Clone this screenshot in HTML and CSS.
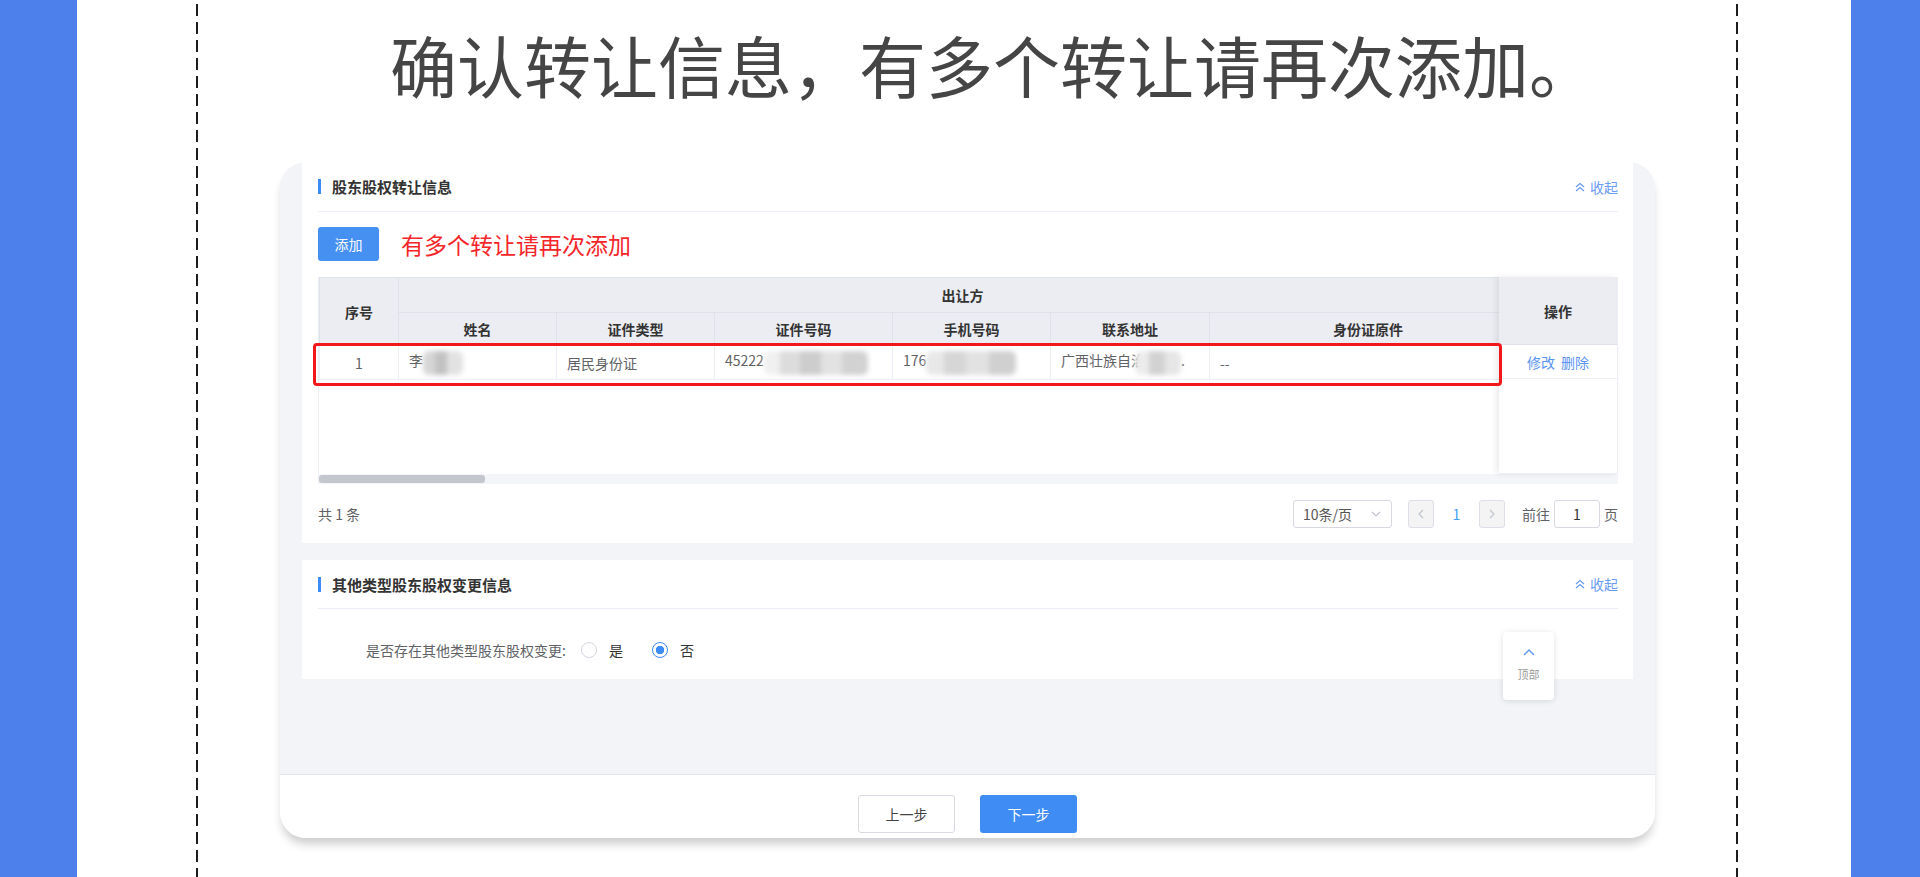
FILE: index.html
```html
<!DOCTYPE html>
<html lang="zh-CN">

<head>
    <meta charset="UTF-8" />
    <meta name="viewport" content="width=device-width, initial-scale=1" />
    <title>确认转让信息</title>
    <link rel="stylesheet" href="styles.css">
</head>

<body>
    <div class="page">
        <div class="side"></div>

        <div class="sheet">
            <div class="frame">
                <h1 class="title">确认转让信息，有多个转让请再次添加。</h1>

                <div class="shot">
                    <!-- 股东股权转让信息 -->
                    <section class="panel panel-first">
                        <div class="panel-head">
                            <span class="panel-title">股东股权转让信息</span>
                            <a class="fold">
                                <svg width="10" height="10" viewBox="0 0 10 10"><polyline points="1,5 5,1.5 9,5" /><polyline points="1,9 5,5.5 9,9" /></svg>
                                收起
                            </a>
                        </div>

                        <div class="toolbar">
                            <button class="btn btn-add">添加</button>
                            <span class="note">有多个转让请再次添加</span>
                        </div>

                        <div class="grid">
                            <div class="grid-body">
                                <div class="grid-main">
                                    <table>
                                        <colgroup>
                                            <col style="width:79px">
                                            <col style="width:158px">
                                            <col style="width:158px">
                                            <col style="width:178px">
                                            <col style="width:158px">
                                            <col style="width:159px">
                                            <col style="width:317px">
                                        </colgroup>
                                        <thead>
                                            <tr class="head-top">
                                                <th rowspan="2">序号</th>
                                                <th colspan="6">出让方</th>
                                            </tr>
                                            <tr class="head-sub">
                                                <th>姓名</th>
                                                <th>证件类型</th>
                                                <th>证件号码</th>
                                                <th>手机号码</th>
                                                <th>联系地址</th>
                                                <th>身份证原件</th>
                                            </tr>
                                        </thead>
                                        <tbody>
                                            <tr>
                                                <td class="num">1</td>
                                                <td>李<span class="blur blur-name"></span></td>
                                                <td>居民身份证</td>
                                                <td>45222<span class="blur blur-id"></span></td>
                                                <td>176<span class="blur blur-phone"></span></td>
                                                <td>广西壮族自治<span class="blur blur-addr"></span>.</td>
                                                <td>--</td>
                                            </tr>
                                        </tbody>
                                    </table>
                                </div>

                                <div class="grid-fixed">
                                    <div class="fixed-head">操作</div>
                                    <div class="fixed-row">
                                        <a>修改</a>
                                        <a>删除</a>
                                    </div>
                                </div>
                            </div>

                            <div class="scrollbar">
                                <div class="scroll-thumb"></div>
                            </div>

                            <div class="mark"></div>
                        </div>

                        <div class="pager">
                            <span class="total">共 1 条</span>
                            <div class="size-select">
                                <span>10条/页</span>
                                <svg width="10" height="6" viewBox="0 0 10 6"><polyline points="1,1 5,5 9,1" /></svg>
                            </div>
                            <span class="page-btn">
                                <svg width="6" height="10" viewBox="0 0 6 10"><polyline points="5,1 1,5 5,9" /></svg>
                            </span>
                            <span class="page-num">1</span>
                            <span class="page-btn">
                                <svg width="6" height="10" viewBox="0 0 6 10"><polyline points="1,1 5,5 1,9" /></svg>
                            </span>
                            <span class="goto">前往</span>
                            <span class="goto-input">1</span>
                            <span class="goto-unit">页</span>
                        </div>
                    </section>

                    <!-- 其他类型股东股权变更信息 -->
                    <section class="panel panel-second">
                        <div class="panel-head">
                            <span class="panel-title">其他类型股东股权变更信息</span>
                            <a class="fold">
                                <svg width="10" height="10" viewBox="0 0 10 10"><polyline points="1,5 5,1.5 9,5" /><polyline points="1,9 5,5.5 9,9" /></svg>
                                收起
                            </a>
                        </div>
                        <div class="form-row">
                            <span class="form-label">是否存在其他类型股东股权变更:</span>
                            <label class="radio"><span class="radio-dot"></span>是</label>
                            <label class="radio checked"><span class="radio-dot"></span>否</label>
                        </div>
                    </section>

                    <div class="shot-gap"></div>

                    <a class="to-top">
                        <svg width="12" height="7" viewBox="0 0 12 7"><polyline points="1,6 6,1 11,6" /></svg>
                        <span>顶部</span>
                    </a>

                    <div class="shot-foot">
                        <button class="btn btn-prev">上一步</button>
                        <button class="btn btn-next">下一步</button>
                    </div>
                </div>
            </div>
        </div>

        <div class="side side-right"></div>
    </div>
</body>

</html>
```

FILE: styles.css
```css
/* Reset & base */
* {
    margin: 0;
    padding: 0;
    box-sizing: border-box;
}

body {
    font-family: "Noto Sans CJK SC", "Noto Sans", sans-serif;
    color: #333;
    background: #fff;
}

a {
    cursor: pointer;
}

/* Page frame */
.page {
    display: flex;
    height: 877px;
    overflow: hidden;
}

.side {
    width: 77px;
    flex-shrink: 0;
    background-color: #4e80ec;
}

.side-right {
    width: 69px;
}

.sheet {
    flex: 1;
    background: #fff;
}

.frame {
    position: relative;
    width: 1542px;
    height: 100%;
    margin-left: 119px;
    background-image:
        repeating-linear-gradient(to bottom, #1c1c1c 0 12px, transparent 12px 18px),
        repeating-linear-gradient(to bottom, #1c1c1c 0 12px, transparent 12px 18px);
    background-size: 2px 100%;
    background-position: left 4px, right 4px;
    background-repeat: no-repeat;
}

.title {
    height: 162px;
    padding: 30px 0 0 52px;
    font-size: 67px;
    line-height: 67px;
    font-weight: 400;
    color: #454545;
    text-align: center;
    white-space: nowrap;
}

/* Screenshot card */
.shot {
    position: relative;
    display: flex;
    flex-direction: column;
    width: 1375px;
    height: 676px;
    margin-left: 84px;
    background-color: #f3f4f8;
    border-radius: 26px;
    overflow: hidden;
    box-shadow: 0 8px 10px -2px rgba(0, 0, 0, 0.2);
}

.panel {
    margin: 0 22px;
    padding: 0 15px 0 16px;
    background: #fff;
}

.panel-second {
    margin-top: 17px;
}

.panel-head {
    display: flex;
    align-items: center;
    justify-content: space-between;
    height: 50px;
    border-bottom: 1px solid #ebeef5;
}

.panel-second .panel-head {
    height: 49px;
}

.panel-title {
    padding-left: 11px;
    border-left: 3px solid #3d8bf5;
    font-size: 15px;
    line-height: 15px;
    font-weight: 700;
    color: #333;
}

.fold {
    display: flex;
    align-items: center;
    gap: 5px;
    font-size: 14px;
    color: #6a9cf6;
}

.fold svg polyline {
    fill: none;
    stroke: #6a9cf6;
    stroke-width: 1.3;
}

/* Toolbar */
.toolbar {
    display: flex;
    align-items: center;
    gap: 22px;
    margin-top: 15px;
}

.btn {
    border: none;
    border-radius: 3px;
    font-family: inherit;
    font-size: 14px;
    cursor: pointer;
}

.btn-add {
    width: 61px;
    height: 34px;
    background-color: #4690f2;
    color: #fff;
}

.note {
    font-size: 23px;
    color: #f4262a;
}

/* Table */
.grid {
    position: relative;
    margin-top: 16px;
}

.grid-body {
    display: flex;
    height: 197px;
}

.grid-main {
    flex: 1;
    overflow: hidden;
    background: #fff;
    border-left: 1px solid #ebeef5;
}

table {
    width: 1207px;
    table-layout: fixed;
    border-collapse: collapse;
}

th {
    padding: 0;
    background-color: #ebedf2;
    border: 1px solid #dfe2e9;
    font-size: 14px;
    font-weight: 700;
    color: #333;
    text-align: center;
}

.head-top th {
    height: 35px;
}

.head-sub th {
    height: 33px;
}

td {
    height: 34px;
    padding: 0 10px;
    border: 1px solid #ebeef5;
    font-size: 14px;
    color: #606266;
    white-space: nowrap;
    overflow: hidden;
}

td.num {
    text-align: center;
}

.blur {
    display: inline-block;
    height: 24px;
    vertical-align: middle;
    border-radius: 6px;
    filter: blur(2.4px);
}

.blur-name {
    width: 40px;
    background: linear-gradient(90deg, #d6d6d6 0 30%, #c2c2c2 30% 60%, #e2e2e2 60% 100%);
}

.blur-id {
    width: 104px;
    background: linear-gradient(90deg, #f0f0f0 0 15%, #dcdcdc 15% 35%, #cdcdcd 35% 55%, #e2e2e2 55% 75%, #d2d2d2 75% 100%);
}

.blur-phone {
    width: 90px;
    background: linear-gradient(90deg, #e8e8e8 0 20%, #d6d6d6 20% 45%, #e2e2e2 45% 70%, #d0d0d0 70% 100%);
}

.blur-addr {
    width: 46px;
    margin-left: -10px;
    background: linear-gradient(90deg, #ececec 0 30%, #d2d2d2 30% 65%, #e6e6e6 65% 100%);
}

.grid-fixed {
    width: 119px;
    flex-shrink: 0;
    background: #fff;
    border-right: 1px solid #ebeef5;
    border-bottom: 1px solid #ebeef5;
    box-shadow: -3px 0 6px rgba(0, 0, 0, 0.08);
}

.fixed-head {
    display: flex;
    align-items: center;
    justify-content: center;
    height: 68px;
    background-color: #ebedf2;
    border-bottom: 1px solid #dfe2e9;
    font-size: 14px;
    font-weight: 700;
}

.fixed-row {
    display: flex;
    align-items: center;
    justify-content: center;
    gap: 6px;
    height: 34px;
    border-bottom: 1px solid #ebeef5;
    font-size: 14px;
    color: #5b93f5;
}

.scrollbar {
    height: 10px;
    padding-top: 1px;
    background-color: #f4f5f8;
    border-left: 1px solid #ebeef5;
}

.scroll-thumb {
    width: 166px;
    height: 8px;
    border-radius: 3px;
    background-color: #c3c6cc;
}

/* red annotation box */
.mark {
    position: absolute;
    left: -5px;
    top: 66px;
    width: 1189px;
    height: 43px;
    border: 3px solid #f2171b;
    border-radius: 4px;
}

/* Pagination */
.pager {
    display: flex;
    align-items: center;
    height: 59px;
    font-size: 14px;
    color: #606266;
}

.total {
    margin-right: auto;
}

.size-select {
    display: flex;
    align-items: center;
    justify-content: space-between;
    width: 99px;
    height: 28px;
    padding: 0 10px 0 9px;
    margin-right: 16px;
    border: 1px solid #d6d9e0;
    border-radius: 3px;
    color: #555;
}

.size-select svg polyline,
.page-btn svg polyline {
    fill: none;
    stroke: #c0c4cc;
    stroke-width: 1.2;
}

.page-btn {
    display: flex;
    align-items: center;
    justify-content: center;
    width: 26px;
    height: 28px;
    background-color: #f4f4f5;
    border: 1px solid #dcdfe6;
    border-radius: 3px;
}

.page-num {
    width: 45px;
    text-align: center;
    color: #409eff;
}

.goto {
    margin-left: 17px;
}

.goto-input {
    width: 46px;
    height: 28px;
    margin: 0 4px;
    line-height: 26px;
    border: 1px solid #d6d9e0;
    border-radius: 3px;
    text-align: center;
    color: #333;
}

/* Second panel form */
.form-row {
    display: flex;
    align-items: center;
    height: 24px;
    margin: 29px 0 17px;
    padding-left: 48px;
    font-size: 14px;
    color: #606266;
}

.form-label {
    margin-right: 15px;
}

.radio {
    display: flex;
    align-items: center;
    gap: 12px;
    margin-right: 29px;
    color: #333;
}

.radio-dot {
    width: 16px;
    height: 16px;
    border: 1px solid #d4d7de;
    border-radius: 50%;
    background: #fff;
}

.radio.checked .radio-dot {
    border-color: #3d8bf5;
    background: radial-gradient(circle, #3d8bf5 0 4px, #fff 4.5px);
}

.shot-gap {
    flex: 1;
}

/* back to top */
.to-top {
    position: absolute;
    left: 1223px;
    top: 470px;
    display: flex;
    flex-direction: column;
    align-items: center;
    gap: 10px;
    width: 51px;
    height: 68px;
    padding-top: 17px;
    background: #fff;
    border-radius: 4px;
    box-shadow: 0 1px 6px rgba(0, 0, 0, 0.12);
    font-size: 11px;
    color: #999;
}

.to-top svg polyline {
    fill: none;
    stroke: #5b93f5;
    stroke-width: 1.4;
}

/* Footer of the screenshot */
.shot-foot {
    display: flex;
    justify-content: center;
    gap: 25px;
    height: 64px;
    padding-top: 20px;
    background: #fff;
    border-top: 1px solid #e2e5eb;
}

.btn-prev,
.btn-next {
    width: 97px;
    height: 38px;
}

.btn-prev {
    background: #fff;
    border: 1px solid #d6d9e0;
    color: #444;
}

.btn-next {
    background-color: #3f8cf4;
    color: #fff;
}
```
